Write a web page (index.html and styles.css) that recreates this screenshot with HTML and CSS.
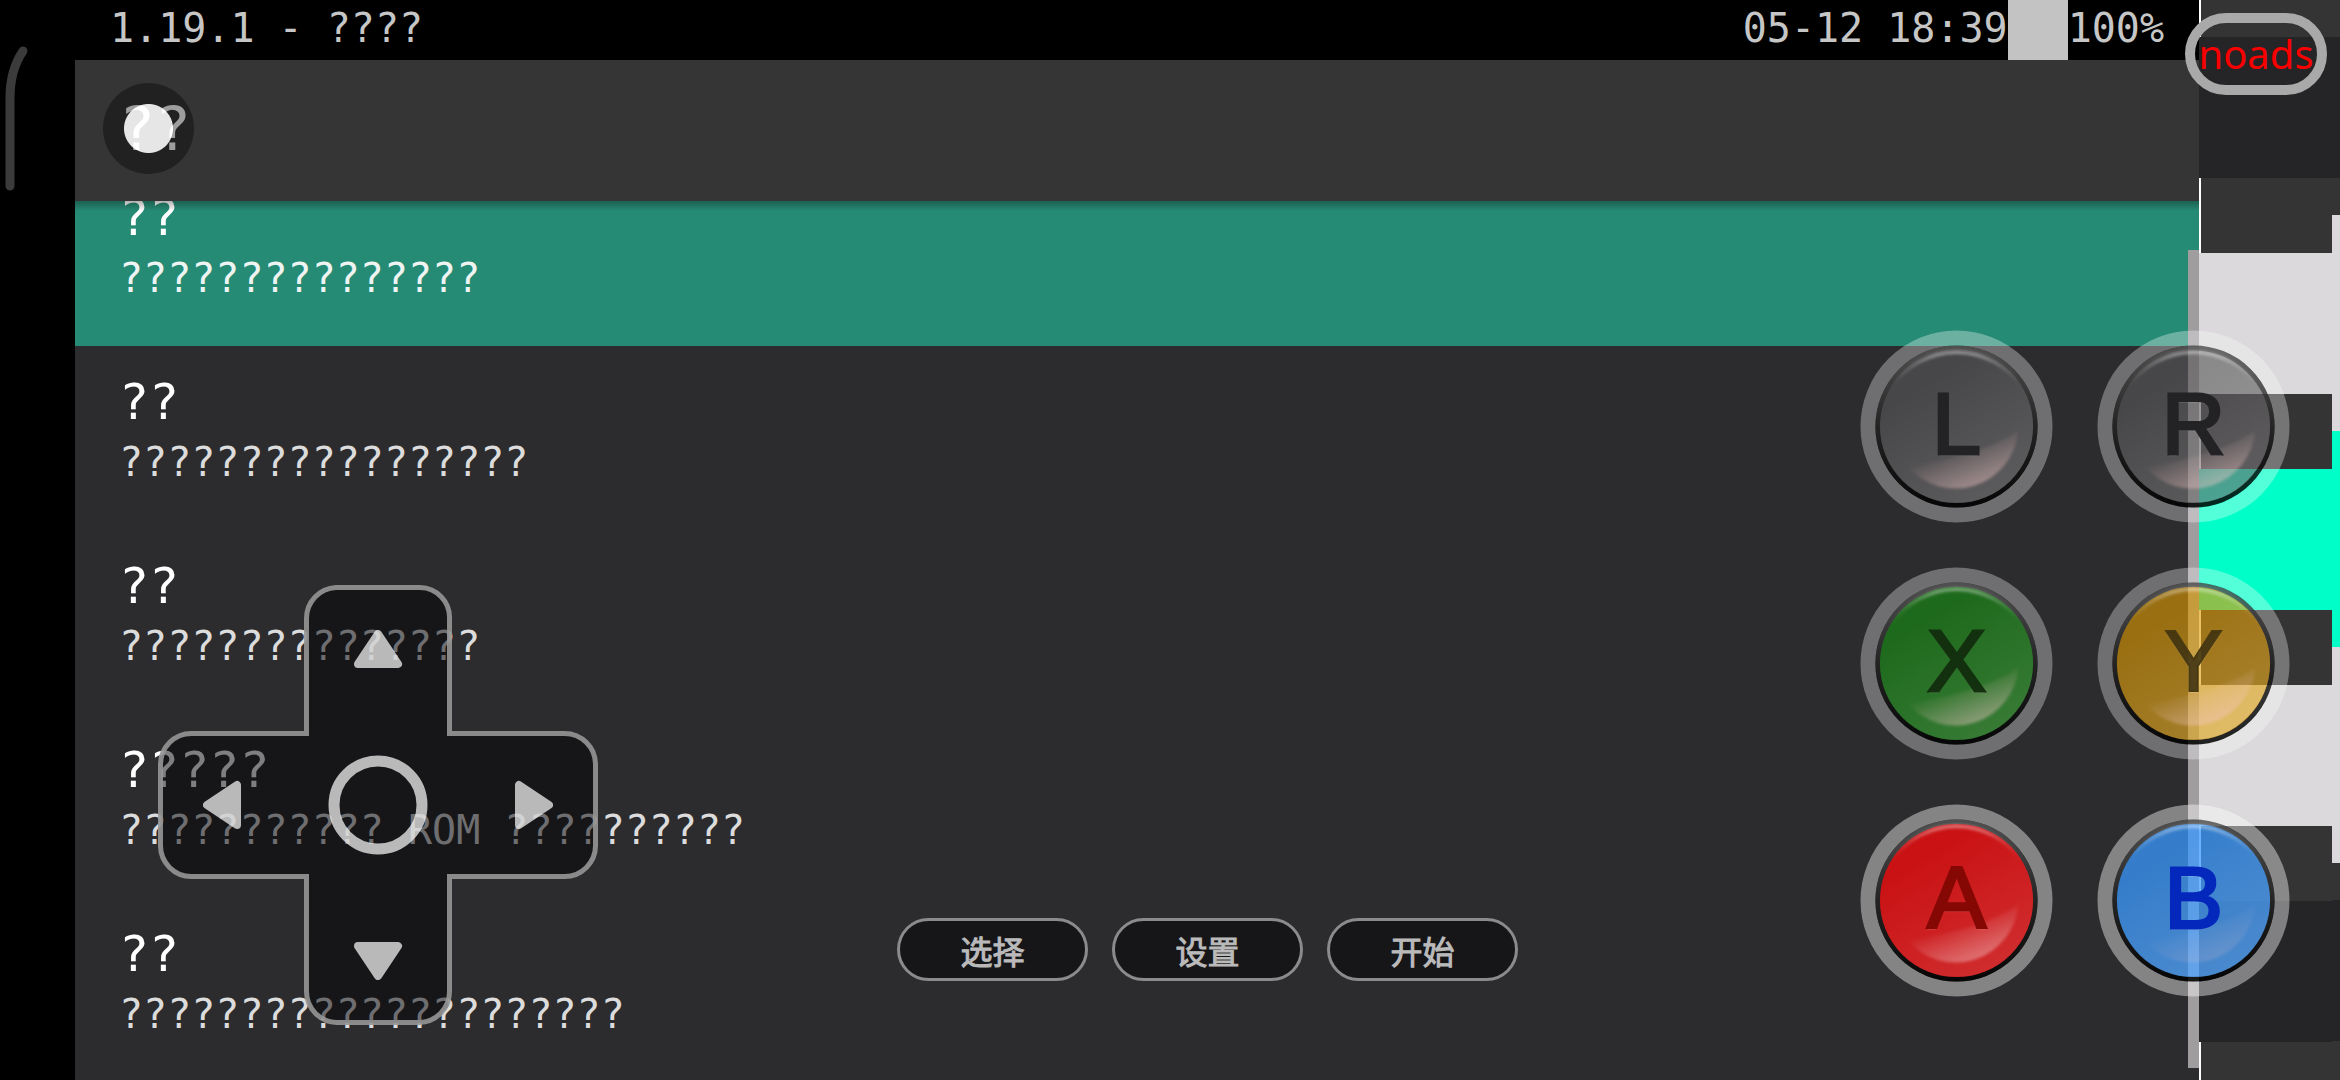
FILE: index.html
```
<!DOCTYPE html>
<html lang="zh-CN">

<head>
    <meta charset="UTF-8">
    <meta name="viewport" content="width=device-width, initial-scale=1.0">
    <title>1.19.1</title>
    <link rel="stylesheet" href="styles.css">
</head>

<body>

    <div class="bezel">
        <svg width="40" height="200" viewBox="0 0 40 200" aria-hidden="true">
            <path d="M10 186V98Q10 70 23 51" fill="none" stroke="#3b3b3b" stroke-width="9" stroke-linecap="round" />
        </svg>
    </div>

    <main class="screen">
        <div class="status">
            <span>1.19.1 - ????</span>
            <span class="clock">05-12 18:39</span>
            <span class="battery"></span>
            <span>100%</span>
        </div>
        <header class="header">
            <h1>??</h1>
        </header>
        <div class="list">
            <ul class="rows">
                <li class="row selected"><a href="#"><strong>??</strong><span>???????????????</span></a></li>
                <li class="row"><a href="#"><strong>??</strong><span>?????????????????</span></a></li>
                <li class="row"><a href="#"><strong>??</strong><span>???????????????</span></a></li>
                <li class="row"><a href="#"><strong>?????</strong><span>??????????? ROM ??????????</span></a></li>
                <li class="row"><a href="#"><strong>??</strong><span>?????????????????????</span></a></li>
            </ul>
            <div class="scrollbar"></div>
        </div>
    </main>

    <aside class="strip">
        <div class="tiles">
            <div class="label first"></div>
            <div class="cell dark"></div>
            <div class="label"></div>
            <div class="cell light"></div>
            <div class="label"></div>
            <div class="cell cyan"></div>
            <div class="label"></div>
            <div class="cell light"></div>
            <div class="label"></div>
            <div class="cell dark"></div>
            <div class="label last"></div>
        </div>
        <div class="edge">
            <div class="half"></div>
            <div class="cell dark"></div>
            <div class="half"></div>
            <div class="side light"></div>
            <div class="side cyan"></div>
            <div class="side light"></div>
            <div class="half"></div>
            <div class="cell dark"></div>
            <div class="half last"></div>
        </div>
    </aside>

    <!-- touch controls -->
    <button class="menu" aria-label="menu"></button>
    <button class="noads">noads</button>

    <div class="dpad">
        <svg viewBox="0 0 440 440" aria-hidden="true">
            <path class="cross" d="M178 2.5H262A30 30 0 0 1 291.500 34V148.500H406A31 31 0 0 1 437.500 180V260A31 31 0 0 1 406 291.500H291.500V406A31 31 0 0 1 260 437.500H180A31 31 0 0 1 148.500 406V291.500H34A31 31 0 0 1 2.500 260V180A31 31 0 0 1 34 148.500H148.500V34A31 31 0 0 1 178 2.500Z" />
            <circle class="ring" cx="220" cy="220" r="44" />
            <g class="arrows">
                <path d="M220 49L240 79H200Z" />
                <path d="M220 391L240 361H200Z" />
                <path d="M49 220L79 200V240Z" />
                <path d="M391 220L361 200V240Z" />
            </g>
        </svg>
        <button class="up" aria-label="up"></button>
        <button class="left" aria-label="left"></button>
        <button class="right" aria-label="right"></button>
        <button class="down" aria-label="down"></button>
    </div>

    <div class="system">
        <button>选择</button>
        <button>设置</button>
        <button>开始</button>
    </div>

    <svg class="defs" aria-hidden="true">
        <defs>
            <linearGradient id="rim" x1="0" y1="0" x2="0" y2="1">
                <stop offset="0" stop-color="#555" />
                <stop offset="0.500" stop-color="#222" />
                <stop offset="1" stop-color="#000" />
            </linearGradient>
            <linearGradient id="sheen" x1="0.200" y1="0" x2="0.800" y2="1">
                <stop offset="0.200" stop-color="#fff" stop-opacity="0" />
                <stop offset="1" stop-color="#fff" stop-opacity="0.120" />
            </linearGradient>
            <linearGradient id="top-light" x1="0" y1="0" x2="0" y2="1">
                <stop offset="0" stop-color="#fff" stop-opacity="0.450" />
                <stop offset="1" stop-color="#fff" stop-opacity="0" />
            </linearGradient>
            <linearGradient id="glare" gradientUnits="userSpaceOnUse" x1="0" y1="22" x2="18" y2="70">
                <stop offset="0" stop-color="var(--glare, #f4c8c8)" stop-opacity="0" />
                <stop offset="1" stop-color="var(--glare, #f4c8c8)" stop-opacity="0.550" />
            </linearGradient>
            <filter id="soft" x="-10%" y="-10%" width="120%" height="120%">
                <feGaussianBlur stdDeviation="1.500" />
            </filter>
        </defs>
        <symbol id="pad" viewBox="-97 -97 194 194">
            <circle class="pad-ring" r="89" fill="none" stroke="#fff" stroke-width="15" />
            <circle r="79" fill="none" stroke="url(#rim)" stroke-width="5" stroke-opacity="0.850" />
            <circle class="pad-face" r="77" fill="currentColor" />
            <circle r="77" fill="url(#sheen)" />
            <path d="M-66 -38A76 76 0 0 1 66 -38A80 80 0 0 0 -66 -38Z" fill="url(#top-light)" filter="url(#soft)" />
            <path class="glare" d="M62 4A63 63 0 0 1 -49 40C-10 34 34 24 62 4Z" fill="url(#glare)" filter="url(#soft)" />
        </symbol>
    </svg>

    <div class="buttons">
        <button class="pad grey"><svg><use href="#pad" /></svg><span>L</span></button>
        <button class="pad grey"><svg><use href="#pad" /></svg><span>R</span></button>
        <button class="pad green"><svg><use href="#pad" /></svg><span>X</span></button>
        <button class="pad yellow"><svg><use href="#pad" /></svg><span>Y</span></button>
        <button class="pad red"><svg><use href="#pad" /></svg><span>A</span></button>
        <button class="pad blue"><svg><use href="#pad" /></svg><span>B</span></button>
    </div>

</body>

</html>
```
FILE: styles.css
```
* {
    box-sizing: border-box;
}

body {
    margin: 0;
    height: 100vh;
    display: grid;
    grid-template-columns: 75px 1fr 141px;
    position: relative;
    overflow: hidden;
    background-color: #000;
    font-family: "DejaVu Sans Mono", "Noto Sans CJK SC", monospace;
}

button {
    padding: 0;
    border: none;
    background: none;
    cursor: pointer;
}

/* screen */
.screen {
    display: flex;
    flex-direction: column;
    min-width: 0;
    min-height: 0;
    background-color: #2c2c2e;
}

.status {
    display: flex;
    height: 60px;
    padding: 0 35px;
    background-color: #000;
    color: #c6c6c6;
    font-size: 40px;
    line-height: 56px;
}

.clock {
    margin-left: auto;
}

.battery {
    width: 60px;
    background-color: #c3c3c3;
}

.header {
    height: 141px;
    padding: 0 0 4px 44px;
    display: flex;
    align-items: center;
    background-color: #353535;
}

h1 {
    margin: 0;
    color: #fff;
    font-size: 60px;
    font-weight: normal;
}

.list {
    flex: 1;
    min-height: 0;
    position: relative;
    overflow: hidden;
}

.list::before {
    content: "";
    position: absolute;
    top: 0;
    left: 0;
    right: 0;
    height: 10px;
    background: linear-gradient(rgba(0, 0, 0, 0.3), rgba(0, 0, 0, 0));
}

/* scrolled down a little */
.rows {
    margin: -39px 0 0;
    padding: 0;
    list-style: none;
}

.row {
    height: 184px;
    padding: 26px 44px 0;
}

.row a {
    display: flex;
    flex-direction: column;
    color: #dcdcdc;
    font-size: 40px;
    line-height: 60px;
    text-decoration: none;
}

.row strong {
    color: #fff;
    font-size: 50px;
    font-weight: normal;
}

.selected {
    background-color: #268b74;
}

.selected a {
    color: #eef4f2;
}

.scrollbar {
    position: absolute;
    top: 49px;
    right: 0;
    bottom: 12px;
    width: 11px;
    background-color: #a09d9f;
}

/* right strip */
.strip {
    display: flex;
    overflow: hidden;
    background-color: #353335;
}

.tiles {
    flex: 1;
    display: flex;
    flex-direction: column;
}

.edge {
    width: 8px;
    display: flex;
    flex-direction: column;
}

.label {
    height: 75px;
    border-left: 2px solid #fff;
    background-color: #353435;
}

.label.first {
    height: 37px;
}

.label.last {
    flex: 1;
}

.cell {
    height: 141px;
}

.half {
    height: 37px;
    background-color: #353435;
}

.half.last {
    flex: 1;
}

.side {
    height: 216px;
}

.dark {
    background-color: #252426;
}

.light {
    background-color: #dbd9db;
}

.cyan {
    background-color: #00ffc8;
}

/* touch controls */
.menu {
    position: absolute;
    left: 103px;
    top: 83px;
    width: 91px;
    height: 91px;
    border-radius: 50%;
    background: radial-gradient(circle, rgba(255, 255, 255, 0.88) 24px, rgba(0, 0, 0, 0.38) 25px);
}

.noads {
    position: absolute;
    right: 13px;
    top: 13px;
    width: 142px;
    height: 82px;
    border: 10px solid #a9a9a9;
    border-radius: 41px;
    color: #f90000;
    font: 40px/56px "Noto Sans", sans-serif;
}

.dpad {
    position: absolute;
    left: 158px;
    bottom: 55px;
    width: 440px;
    height: 440px;
    display: grid;
    grid-template-columns: repeat(3, 1fr);
    grid-template-rows: repeat(3, 1fr);
    grid-template-areas: ". up ." "left . right" ". down .";
}

.dpad svg {
    position: absolute;
    width: 100%;
    height: 100%;
}

.dpad button {
    position: relative;
}

.cross {
    fill: rgba(0, 0, 4, 0.5);
    stroke: rgba(150, 150, 150, 0.9);
    stroke-width: 5px;
}

.ring {
    fill: none;
    stroke: rgba(255, 255, 255, 0.7);
    stroke-width: 11px;
}

.arrows {
    fill: #fff;
    stroke: #fff;
    stroke-width: 8px;
    stroke-linejoin: round;
    opacity: 0.7;
}

.up {
    grid-area: up;
}

.left {
    grid-area: left;
}

.right {
    grid-area: right;
}

.down {
    grid-area: down;
}

.system {
    position: absolute;
    left: 897px;
    bottom: 99px;
    display: flex;
    gap: 24px;
}

.system button {
    width: 191px;
    height: 63px;
    border: 3px solid #8b8b8c;
    border-radius: 32px;
    background-color: #161618;
    color: #bababb;
    font: 32px/56px "Noto Sans CJK SC", sans-serif;
    -webkit-text-stroke: 1px currentColor;
}

.defs {
    position: absolute;
    width: 0;
    height: 0;
}

.buttons {
    position: absolute;
    right: 50px;
    bottom: 83px;
    display: grid;
    grid-template-columns: 193px 193px;
    gap: 44px;
}

.pad {
    height: 193px;
    display: grid;
    place-items: center;
}

.pad svg,
.pad span {
    grid-area: 1 / 1;
}

.pad svg {
    width: 193px;
    height: 193px;
}

.pad span {
    padding-bottom: 6px;
    font: 88px/96px "Liberation Sans", Arial, sans-serif;
    -webkit-text-stroke: 3px currentColor;
    text-shadow: 0 2px 1px rgba(255, 255, 255, 0.2);
}

.pad-ring {
    opacity: var(--ring, 0.32);
}

.pad-face {
    opacity: var(--face, 0.62);
}

.glare {
    opacity: var(--shine, 1);
}

.grey svg {
    color: #585759;
}

.grey span {
    color: #232224;
}

.green svg {
    color: #169111;
}

.green span {
    color: #13300f;
}

.yellow svg {
    color: #dd9900;
}

.yellow span {
    color: rgba(48, 36, 6, 0.8);
    -webkit-text-stroke: 2px #4a3a12;
}

.red,
.blue {
    --ring: 0.42;
    --face: 0.75;
}

.red svg {
    color: #ff0a0c;
}

.red span {
    color: #850804;
}

.blue {
    --shine: 0.4;
}

.blue svg {
    color: #3898ff;
}

.blue span {
    color: #0428bb;
}
```
